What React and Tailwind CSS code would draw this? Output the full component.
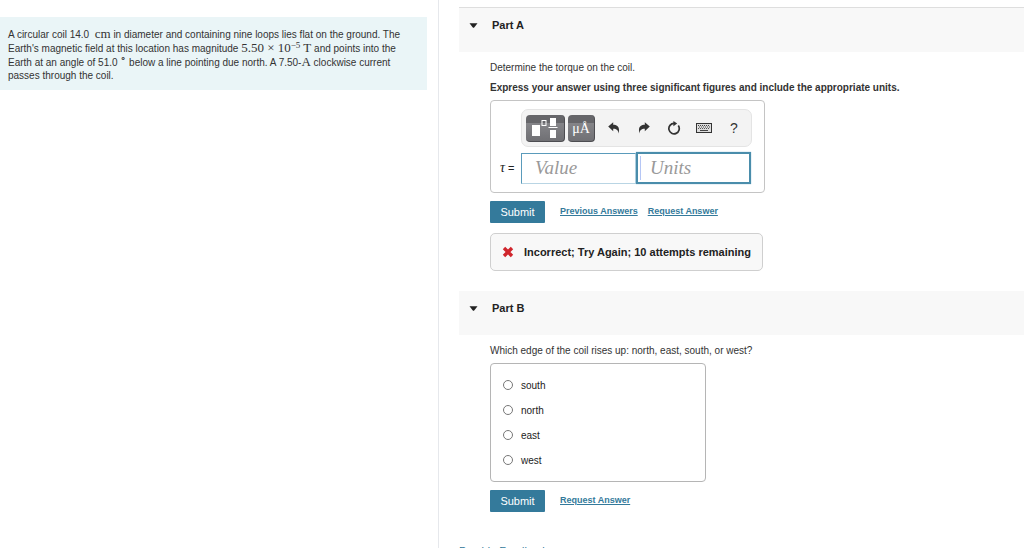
import { useState } from "react";

function PartHeader({ title, topLine }) {
  return (
    <h2
      className={
        "flex items-start bg-[#f8f8f8] pt-[9px] pl-[10px] text-[11px] leading-4 font-bold text-[#222] " +
        (topLine ? "h-[45px] border-t border-[#dedede]" : "h-11")
      }
    >
      <button type="button" className="flex items-center gap-[14px]">
        <svg width="9" height="5" viewBox="0 0 9 5" aria-hidden="true">
          <path d="M0.5 0.3h8L5.4 4.2a1.2 1.2 0 0 1-1.8 0z" fill="#222" />
        </svg>
        {title}
      </button>
    </h2>
  );
}

function SubmitButton() {
  return (
    <button type="submit" className="h-[22px] w-[55px] rounded-[1px] bg-[#347a9b] text-[11px] text-white">
      Submit
    </button>
  );
}

function TextLink({ children }) {
  return (
    <a href="#" className="text-[9px] font-bold text-[#347a9b] underline">
      {children}
    </a>
  );
}

function ToolButton({ label, children }) {
  return (
    <button type="button" aria-label={label} className="flex h-5 w-[30px] items-center justify-center text-[#333]">
      {children}
    </button>
  );
}

function Undo() {
  return (
    <svg width="12" height="12" viewBox="0 0 12 12" fill="#333" aria-hidden="true">
      <path d="M0.2 4.6 5.2 0.2V2.8C9.4 2.8 12.4 5.4 10.4 11.4 10.2 8.4 8.8 6.8 5.2 6.8V9.2z" />
    </svg>
  );
}

function Redo() {
  return (
    <svg width="12" height="12" viewBox="0 0 12 12" fill="#333" aria-hidden="true">
      <path d="M11.8 4.6 6.8 0.2V2.8C2.6 2.8 -0.4 5.4 1.6 11.4 1.8 8.4 3.2 6.8 6.8 6.8V9.2z" />
    </svg>
  );
}

function Reset() {
  return (
    <svg width="14" height="14" viewBox="0 0 14 14" aria-hidden="true">
      <path d="M11.3 4.6A5.2 5.2 0 1 1 7 2.4" fill="none" stroke="#333" strokeWidth="1.7" />
      <path d="M6.4 0 10.2 2.6 6.4 5.3z" fill="#333" />
    </svg>
  );
}

function Keyboard() {
  return (
    <svg width="16" height="10" viewBox="0 0 16 10" aria-hidden="true">
      <rect x="0.5" y="0.5" width="15" height="9" fill="#ddd" stroke="#333" />
      <path d="M2 2.5h12" stroke="#444" strokeDasharray="1 1" />
      <path d="M3 4h11" stroke="#444" strokeDasharray="1 1" />
      <path d="M2 5.5h12" stroke="#555" strokeDasharray="1 1" />
      <path d="M4 7.5h8" stroke="#444" />
    </svg>
  );
}

function Templates() {
  return (
    <svg width="39" height="26" viewBox="0 0 39 26" aria-hidden="true">
      <rect x="6" y="10" width="8" height="11" fill="#fff" />
      <rect x="16" y="5.5" width="4" height="5" fill="none" stroke="#fff" />
      <rect x="24" y="3" width="6" height="8" fill="#fff" />
      <path d="M22.5 12.5h9" stroke="#fff" />
      <rect x="24" y="15" width="6" height="8" fill="#fff" />
    </svg>
  );
}

function AnswerPad() {
  return (
    <div className="mt-[5px] w-[275px] rounded-[4px] border border-[#c4c4c4] pt-2 pr-3 pb-2 pl-[9px]">
      <div className="ml-[21px] flex h-[38px] items-center rounded-[7px] border border-[#e4e4e4] bg-[#f3f3f3] pl-1">
        <button
          type="button"
          aria-label="Templates"
          className="mr-[3px] h-[27px] w-[39px] rounded-[4px] border-r border-b border-[#4d4d51] bg-linear-to-b from-[#66666a] from-30% via-[#858589] via-30% to-[#707074]"
        >
          <Templates />
        </button>
        <button
          type="button"
          aria-label="Units"
          className="mr-1 h-[27px] w-[27px] rounded-[4px] border-r border-b border-[#4d4d51] bg-linear-to-b from-[#66666a] from-30% via-[#858589] via-30% to-[#707074] pt-[3px] font-['Liberation_Serif',serif] text-sm text-white"
        >
          μÅ
        </button>
        <ToolButton label="Undo"><Undo /></ToolButton>
        <ToolButton label="Redo"><Redo /></ToolButton>
        <ToolButton label="Reset"><Reset /></ToolButton>
        <ToolButton label="Keyboard shortcuts"><Keyboard /></ToolButton>
        <ToolButton label="Help"><span className="text-sm">?</span></ToolButton>
      </div>
      <div className="mt-[5px] flex items-center">
        <label htmlFor="tau" className="w-[21px] shrink-0 text-[11px] whitespace-nowrap text-[#222]">
          <i className="font-['Liberation_Serif',serif] text-sm">τ</i> =
        </label>
        <input
          id="tau"
          placeholder="Value"
          className="h-[31px] w-[115px] border border-[#b9d5e4] border-t-[#5a9bbb] border-l-[#5a9bbb] pl-[13px] font-['Liberation_Serif',serif] text-[19px] italic outline-none placeholder:text-[#999]"
        />
        <div className="flex h-8 w-[115px] items-center border-2 border-[#4a8dab] pl-[2px] shadow-[0_0_1px_#7db4cf]">
          <span className="h-6 w-px bg-[#b5c6f5]" />
          <input
            aria-label="Units of the torque"
            placeholder="Units"
            className="w-full min-w-0 pl-[9px] font-['Liberation_Serif',serif] text-[19px] italic outline-none placeholder:text-[#999]"
          />
        </div>
      </div>
    </div>
  );
}

function Problem() {
  return (
    <p className="mt-[17px] mr-[11px] bg-[#eaf5f7] pt-[10px] pb-2 pl-2 text-[10px] leading-[13px] whitespace-nowrap text-[#333]">
      A circular coil 14.0&nbsp; <span className="font-['Liberation_Serif',serif] text-[13px]">cm</span> in diameter and
      containing nine loops lies flat on the ground. The
      <br />
      Earth's magnetic field at this location has magnitude{" "}
      <span className="font-['Liberation_Serif',serif] text-[13px]">
        5.50 × 10<sup className="text-[9px]">−5</sup> T
      </span>{" "}
      and points into the
      <br />
      Earth at an angle of 51.0 <sup className="text-[10px] leading-none">∘</sup> below a line pointing due north. A 7.50-
      <span className="font-['Liberation_Serif',serif] text-[13px]">A</span> clockwise current
      <br />
      passes through the coil.
    </p>
  );
}

export default function App() {
  const [edge, setEdge] = useState("");
  return (
    <div className="flex h-screen overflow-hidden bg-white font-['Liberation_Sans',Arial,sans-serif] text-[#333]">
      <aside className="w-[439px] shrink-0 border-r border-[#e6e8ec]">
        <Problem />
      </aside>
      <main className="min-w-0 grow pt-[7px] pl-5">
        <PartHeader title="Part A" topLine />
        <form className="pt-[9px] pl-[31px]" onSubmit={(e) => e.preventDefault()}>
          <p className="text-[10px] leading-[14px]">Determine the torque on the coil.</p>
          <p className="mt-[6px] text-[10px] leading-[14px] font-bold">
            Express your answer using three significant figures and include the appropriate units.
          </p>
          <AnswerPad />
          <div className="mt-2 flex items-center">
            <SubmitButton />
            <div className="ml-[15px] flex gap-[10px]">
              <TextLink>Previous Answers</TextLink>
              <TextLink>Request Answer</TextLink>
            </div>
          </div>
          <p className="mt-[10px] flex h-[38px] w-fit items-center gap-[10px] rounded-[5px] border border-[#cfcfcf] bg-[#f8f8f8] px-[11px] text-[11px] font-bold text-[#222]">
            <svg width="12" height="12" viewBox="0 0 12 12" aria-hidden="true">
              <path d="M2 2l8 8M10 2l-8 8" stroke="#d0262d" strokeWidth="3.4" />
            </svg>
            Incorrect; Try Again; 10 attempts remaining
          </p>
        </form>
        <div className="mt-5">
          <PartHeader title="Part B" />
        </div>
        <form className="pt-[9px] pl-[31px]" onSubmit={(e) => e.preventDefault()}>
          <fieldset>
            <legend className="text-[10px] leading-[14px]">
              Which edge of the coil rises up: north, east, south, or west?
            </legend>
            <div className="mt-[5px] flex w-[216px] flex-col gap-[9px] rounded-[4px] border border-[#b5b5b5] px-3 pt-[13px] pb-[13px]">
              {["south", "north", "east", "west"].map((name) => (
                <label key={name} className="flex h-4 items-center gap-2 text-[10px] text-[#222]">
                  <input
                    type="radio"
                    name="edge"
                    checked={edge === name}
                    onChange={() => setEdge(name)}
                    className="size-[10px] appearance-none rounded-full border border-[#777] bg-white checked:border-[3px]"
                  />
                  {name}
                </label>
              ))}
            </div>
          </fieldset>
          <div className="mt-2 flex items-center">
            <SubmitButton />
            <div className="ml-[15px] flex">
              <TextLink>Request Answer</TextLink>
            </div>
          </div>
        </form>
        <a href="#" className="mt-[31px] block w-fit text-[11px] leading-4 text-[#347a9b]">
          Provide Feedback
        </a>
      </main>
    </div>
  );
}
